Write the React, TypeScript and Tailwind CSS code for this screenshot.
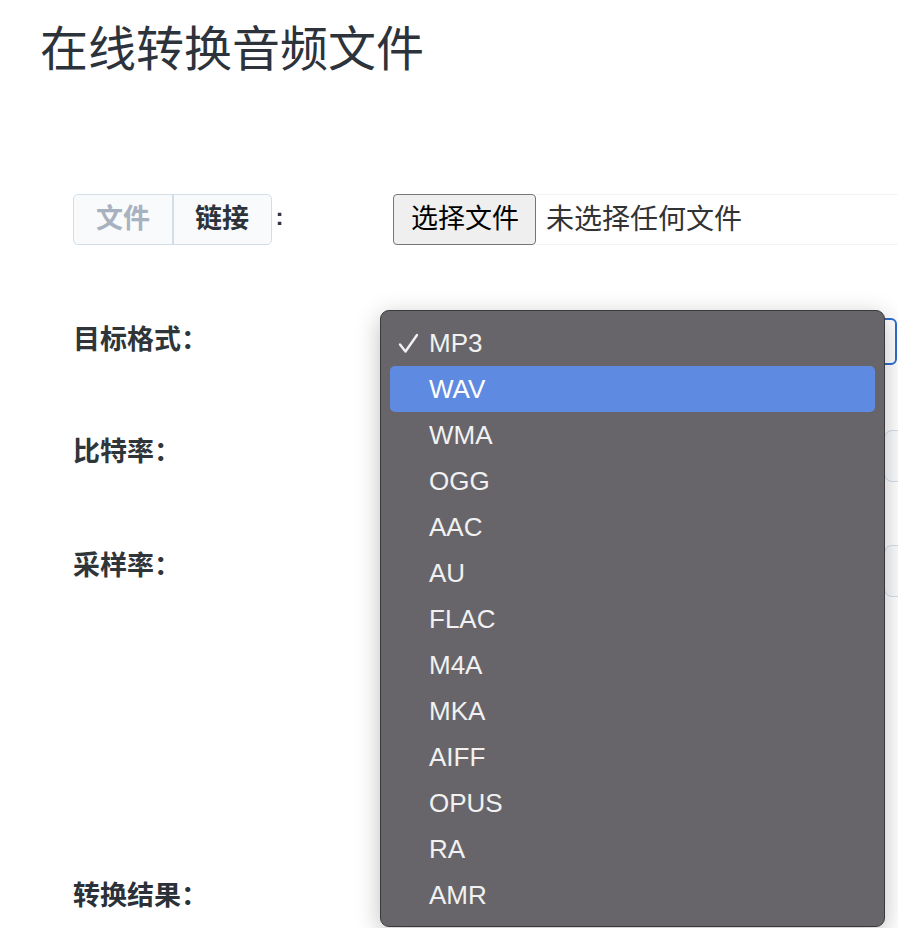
import React from "react";

const formats = ["MP3", "WAV", "WMA", "OGG", "AAC", "AU", "FLAC", "M4A", "MKA", "AIFF", "OPUS", "RA", "AMR"];

/* ─── Open format menu (macOS style popup) ─── */
const FormatMenu: React.FC<{ selected: string; hovered: string }> = ({ selected, hovered }) => (
  <div className="absolute left-[380px] top-[310px] w-[505px] h-[617px] rounded-[9px] border border-[#3a393c] bg-[#67656a] shadow-[0_6px_24px_rgba(0,0,0,0.25)] px-[9px] pt-[9px] font-['Liberation_Sans',sans-serif]">
    {formats.map((f) => (
      <div
        key={f}
        className={`relative h-[46px] flex items-center pl-[39px] text-[26px] rounded-[5px] ${
          f === hovered ? "bg-[#5f8ae2] text-white" : "text-[#f1f1f1]"
        }`}
      >
        {f === selected && (
          <svg
            className="absolute left-[8px] top-[13px]"
            width="21"
            height="21"
            viewBox="0 0 21 21"
            fill="none"
            stroke="#f1f1f1"
            strokeWidth="2.4"
            strokeLinecap="round"
            strokeLinejoin="round"
          >
            <path d="M2 11.5 L7.5 18.5 L19 2" />
          </svg>
        )}
        {f}
      </div>
    ))}
  </div>
);

export default function App() {
  return (
    <div className="relative w-[898px] h-[928px] overflow-hidden bg-white font-['Liberation_Sans','Noto_Sans_CJK_SC',sans-serif]">
      <h1 className="pl-[40px] pt-[20px] text-[48px] leading-[60px] font-normal text-[#2d333a]">
        在线转换音频文件
      </h1>

      <div className="pl-[73px] mt-[114px]">
        {/* ── source ── */}
        <div className="flex items-center h-[51px]">
          <div className="w-[320px] shrink-0 flex items-center">
            <div className="flex h-[51px] rounded-[5px] border-[1.5px] border-[#d2dde8] bg-[#f9fafb] overflow-hidden">
              <button className="w-[98px] text-[27px] font-bold text-[#a7b1bf]">文件</button>
              <div className="w-[1.5px] bg-[#d2dde8]" />
              <button className="w-[97px] text-[27px] font-bold text-[#2d333a]">链接</button>
            </div>
            <span className="ml-[4px] text-[24px] font-bold text-[#2d333a] -mt-[6px]">:</span>
          </div>
          <div className="flex-1 flex items-center h-[51px]">
            <button className="h-[51px] shrink-0 pl-[17px] pr-[16px] rounded-[4px] border border-[#767676] bg-[#efefef] text-[27px] text-black">
              选择文件
            </button>
            <div className="flex-1 h-[51px] flex items-center pl-[10px] border-y border-[#f3f3f3] text-[28px] text-[#333]">
              未选择任何文件
            </div>
          </div>
        </div>

        {/* ── target format ── */}
        <div className="flex items-center h-[47px] mt-[73px]">
          <div className="w-[320px] shrink-0 pb-[2px] text-[27px] font-bold text-[#2f3539]">目标格式：</div>
          <div className="w-[504px] shrink-0 h-[47px] rounded-[6px] border-2 border-[#2f6dcf] bg-white" />
        </div>

        {/* ── bitrate ── */}
        <div className="flex items-center h-[52px] mt-[65px]">
          <div className="w-[320px] shrink-0 pb-[7px] text-[27px] font-bold text-[#2f3539]">比特率：</div>
          <div className="w-[484px] shrink-0 h-[52px] rounded-[6px] border border-[#d2dde8]" />
          <div className="ml-[7px] w-[60px] shrink-0 h-[52px] rounded-l-[8px] border border-[#d2dde8] bg-[#fafbfc]" />
        </div>

        {/* ── sample rate ── */}
        <div className="flex items-center h-[52px] mt-[63px]">
          <div className="w-[320px] shrink-0 pb-[10px] text-[27px] font-bold text-[#2f3539]">采样率：</div>
          <div className="w-[484px] shrink-0 h-[52px] rounded-[6px] border border-[#d2dde8]" />
          <div className="ml-[7px] w-[60px] shrink-0 h-[52px] rounded-l-[8px] border border-[#d2dde8] bg-[#fafbfc]" />
        </div>

        {/* ── result ── */}
        <div className="flex items-center h-[47px] mt-[276px]">
          <div className="w-[320px] shrink-0 text-[27px] font-bold text-[#2c3038]">转换结果：</div>
        </div>
      </div>

      <FormatMenu selected="MP3" hovered="WAV" />
    </div>
  );
}
